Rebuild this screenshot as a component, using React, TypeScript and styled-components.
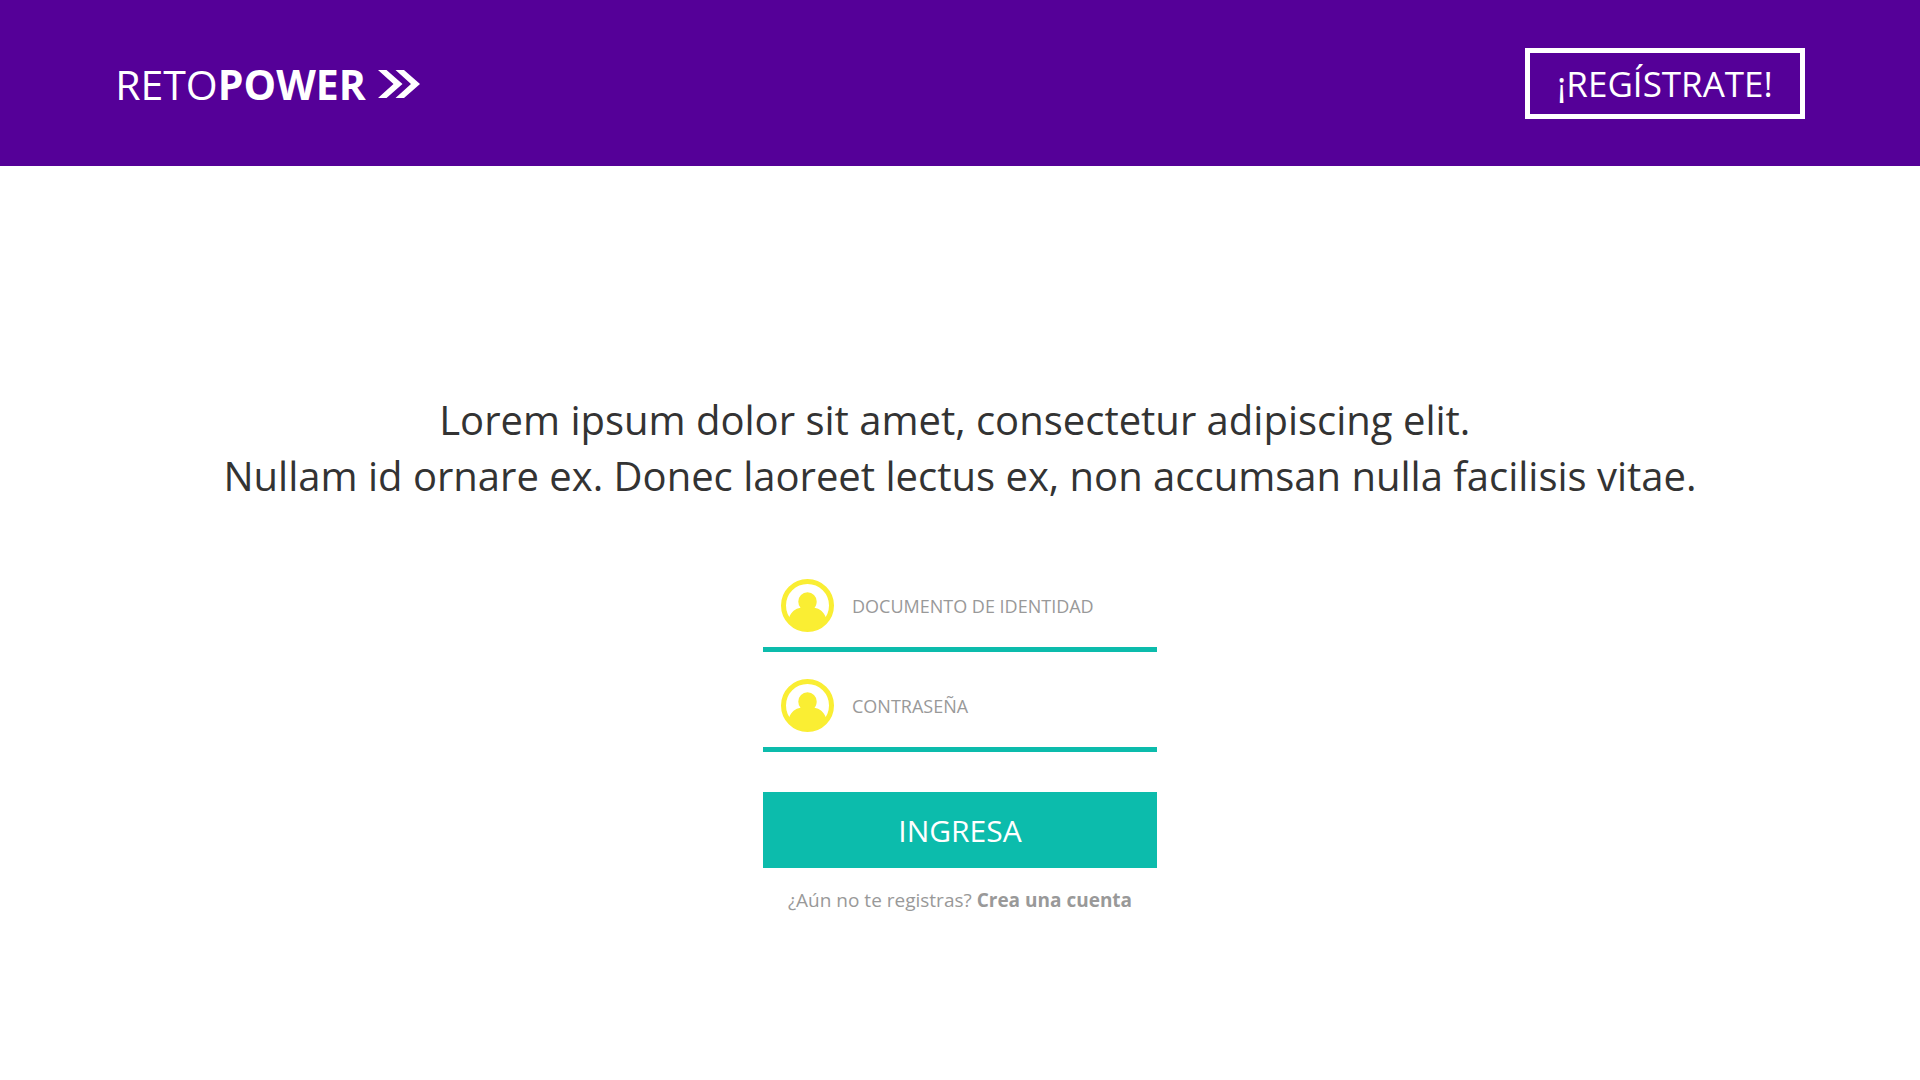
import React, { useState } from "react";
import styled, { createGlobalStyle } from "styled-components";

const colors = {
  purple: "#550098",
  teal: "#0cbcac",
  yellow: "#faee33",
  ink: "#333333",
  gray: "#999999",
  white: "#ffffff",
};

const GlobalStyle = createGlobalStyle`
  *, *::before, *::after {
    box-sizing: border-box;
  }
  body {
    margin: 0;
    background: ${colors.white};
    color: ${colors.ink};
    font-family: "Open Sans", "Noto Sans", sans-serif;
  }
`;

const Header = styled.header`
  display: flex;
  align-items: center;
  justify-content: space-between;
  padding: 48px 6% 47px;
  background: ${colors.purple};
`;

const Logo = styled.a`
  display: flex;
  align-items: center;
  gap: 12px;
  color: ${colors.white};
  font-size: 41px;
  line-height: 56px;
  text-decoration: none;
`;

const LogoMark = styled.svg`
  width: 42px;
  height: 30px;
`;

const RegisterButton = styled.button`
  padding: 7px 27px 6px;
  border: 5px solid ${colors.white};
  background: transparent;
  color: ${colors.white};
  font-family: inherit;
  font-size: 35px;
  line-height: 48px;
  cursor: pointer;
`;

const Main = styled.main`
  display: flex;
  flex-direction: column;
  align-items: center;
  padding: 226px 32px 64px;
`;

const Intro = styled.h1`
  margin: 0;
  font-size: 40px;
  font-weight: 400;
  line-height: 56px;
  text-align: center;
`;

const Form = styled.form`
  display: flex;
  flex-direction: column;
  width: 100%;
  max-width: 394px;
  margin-top: 62px;
`;

const Field = styled.label`
  display: flex;
  align-items: center;
  gap: 18px;
  height: 86px;
  margin-bottom: 14px;
  padding: 0 18px 2px;
  border-bottom: 5px solid ${colors.teal};
`;

const UserIcon = styled.svg`
  flex: none;
  width: 53px;
  height: 53px;
`;

const Input = styled.input`
  flex: 1;
  min-width: 0;
  padding: 0;
  border: 0;
  outline: 0;
  background: transparent;
  color: ${colors.ink};
  font-family: inherit;
  font-size: 18px;
  line-height: 28px;

  &::placeholder {
    color: ${colors.gray};
    opacity: 1;
  }
`;

const SubmitButton = styled.button`
  height: 76px;
  margin-top: 26px;
  padding: 2px 0 0;
  border: 0;
  background: ${colors.teal};
  color: ${colors.white};
  font-family: inherit;
  font-size: 30px;
  line-height: 40px;
  cursor: pointer;
`;

const SignUp = styled.p`
  margin: 18px 0 0;
  color: ${colors.gray};
  font-size: 19px;
  line-height: 28px;
  text-align: center;
  white-space: nowrap;
`;

const SignUpLink = styled.a`
  color: inherit;
  font-weight: 700;
  text-decoration: none;
`;

function UserBadge() {
  return (
    <UserIcon viewBox="0 0 53 53" aria-hidden="true">
      <circle cx="26.5" cy="26.5" r="24" fill="none" stroke={colors.yellow} strokeWidth="5" />
      <path
        fill={colors.yellow}
        d="M26.5 13.3a9.2 9.2 0 0 1 9.2 9.2c0 2.400-.8 4.600-2.200 6.200C38.500 29.500 43 33 44.800 38.300L47 39A24 24 0 0 1 6 39l2.200-.7C10 33 14.500 29.500 19.500 28.700a9.200 9.200 0 0 1-2.200-6.200 9.200 9.200 0 0 1 9.200-9.200z"
      />
    </UserIcon>
  );
}

interface CredentialProps {
  label: string;
  type: string;
  name: string;
}

function Credential({ label, type, name }: CredentialProps) {
  const [value, setValue] = useState("");
  return (
    <Field htmlFor={name}>
      <UserBadge />
      <Input
        id={name}
        name={name}
        type={type}
        placeholder={label}
        aria-label={label}
        value={value}
        onChange={(event) => setValue(event.target.value)}
      />
    </Field>
  );
}

export default function App() {
  return (
    <>
      <GlobalStyle />
      <Header>
        <Logo href="#">
          <span>
            RETO<b>POWER</b>
          </span>
          <LogoMark viewBox="0 0 42 30" aria-hidden="true">
            <path
              fill={colors.white}
              d="M0 1h8.500L24.500 15 8.500 29H0L15.500 15zM17.500 1H26L42 15 26 29h-8.500L33 15z"
            />
          </LogoMark>
        </Logo>
        <RegisterButton type="button">¡REGÍSTRATE!</RegisterButton>
      </Header>
      <Main>
        <Intro>
          Lorem ipsum dolor sit amet, consectetur adipiscing elit.&nbsp;
          <br />
          Nullam id ornare ex. Donec laoreet lectus ex, non accumsan nulla facilisis vitae.
        </Intro>
        <Form onSubmit={(event) => event.preventDefault()}>
          <Credential label="DOCUMENTO DE IDENTIDAD" type="text" name="documento" />
          <Credential label="CONTRASEÑA" type="password" name="clave" />
          <SubmitButton type="submit">INGRESA</SubmitButton>
          <SignUp>
            ¿Aún no te registras? <SignUpLink href="#">Crea una cuenta</SignUpLink>
          </SignUp>
        </Form>
      </Main>
    </>
  );
}
